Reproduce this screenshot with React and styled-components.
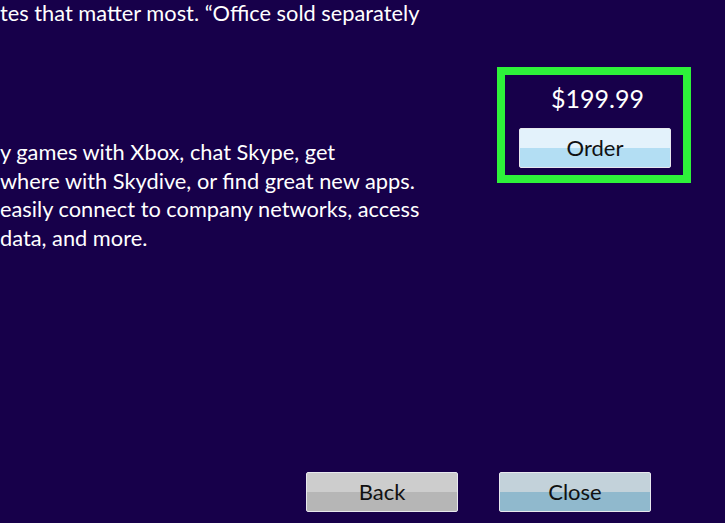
import React from 'react';
import styled, { createGlobalStyle } from 'styled-components';

const GlobalStyle = createGlobalStyle`
  html, body {
    margin: 0;
    padding: 0;
    background: #17004a;
  }
  body {
    font-family: Lato, "Open Sans", sans-serif;
    color: #ffffff;
  }
`;

const Page = styled.div`
  width: 725px;
  height: 523px;
  display: flex;
  flex-direction: column;
  overflow: hidden;
`;

const TopLine = styled.div`
  font-size: 21.8px;
  line-height: 24px;
  padding-top: 1px;
  white-space: nowrap;
`;

const Body = styled.div`
  display: grid;
  grid-template-columns: 497px 194px;
  margin-top: 42px;
`;

const Paragraph = styled.p`
  margin: 71px 0 0;
  font-size: 21.8px;
  line-height: 28.5px;
  white-space: pre;
`;

const OfferBox = styled.div`
  box-sizing: border-box;
  height: 116px;
  border: 8px solid #2ef23a;
  display: flex;
  flex-direction: column;
  align-items: center;
  padding-top: 9px;
`;

const Price = styled.div`
  font-size: 25px;
  line-height: 28px;
  margin-left: 7px;
`;

const Button = styled.button`
  box-sizing: border-box;
  width: 152px;
  height: 40px;
  border: 1px solid #e8e8ee;
  border-radius: 2px;
  font-family: inherit;
  font-size: 22px;
  color: #111;
  padding: 0 0 1px;
  cursor: pointer;
  background: linear-gradient(
    to bottom,
    ${(p) => p.top} 0%,
    ${(p) => p.top} 50%,
    ${(p) => p.bottom} 50%,
    ${(p) => p.bottom} 100%
  );
`;

const OrderButton = styled(Button)`
  margin-top: 16px;
  margin-left: 2px;
`;

const Footer = styled.div`
  margin-top: auto;
  display: flex;
  gap: 41px;
  padding-left: 306px;
  padding-bottom: 11px;
`;

export default function App() {
  return (
    <Page>
      <GlobalStyle />
      <TopLine>tes that matter most. “Office sold separately</TopLine>
      <Body>
        <Paragraph>
          {'y games with Xbox, chat Skype, get\nwhere with Skydive, or find great new apps.\neasily connect to company networks, access\ndata, and more.'}
        </Paragraph>
        <OfferBox>
          <Price>$199.99</Price>
          <OrderButton top="#e3f2fb" bottom="#b3def3">Order</OrderButton>
        </OfferBox>
      </Body>
      <Footer>
        <Button top="#cdcdcd" bottom="#b6b6b6">Back</Button>
        <Button top="#c3d2da" bottom="#90b9cd">Close</Button>
      </Footer>
    </Page>
  );
}
